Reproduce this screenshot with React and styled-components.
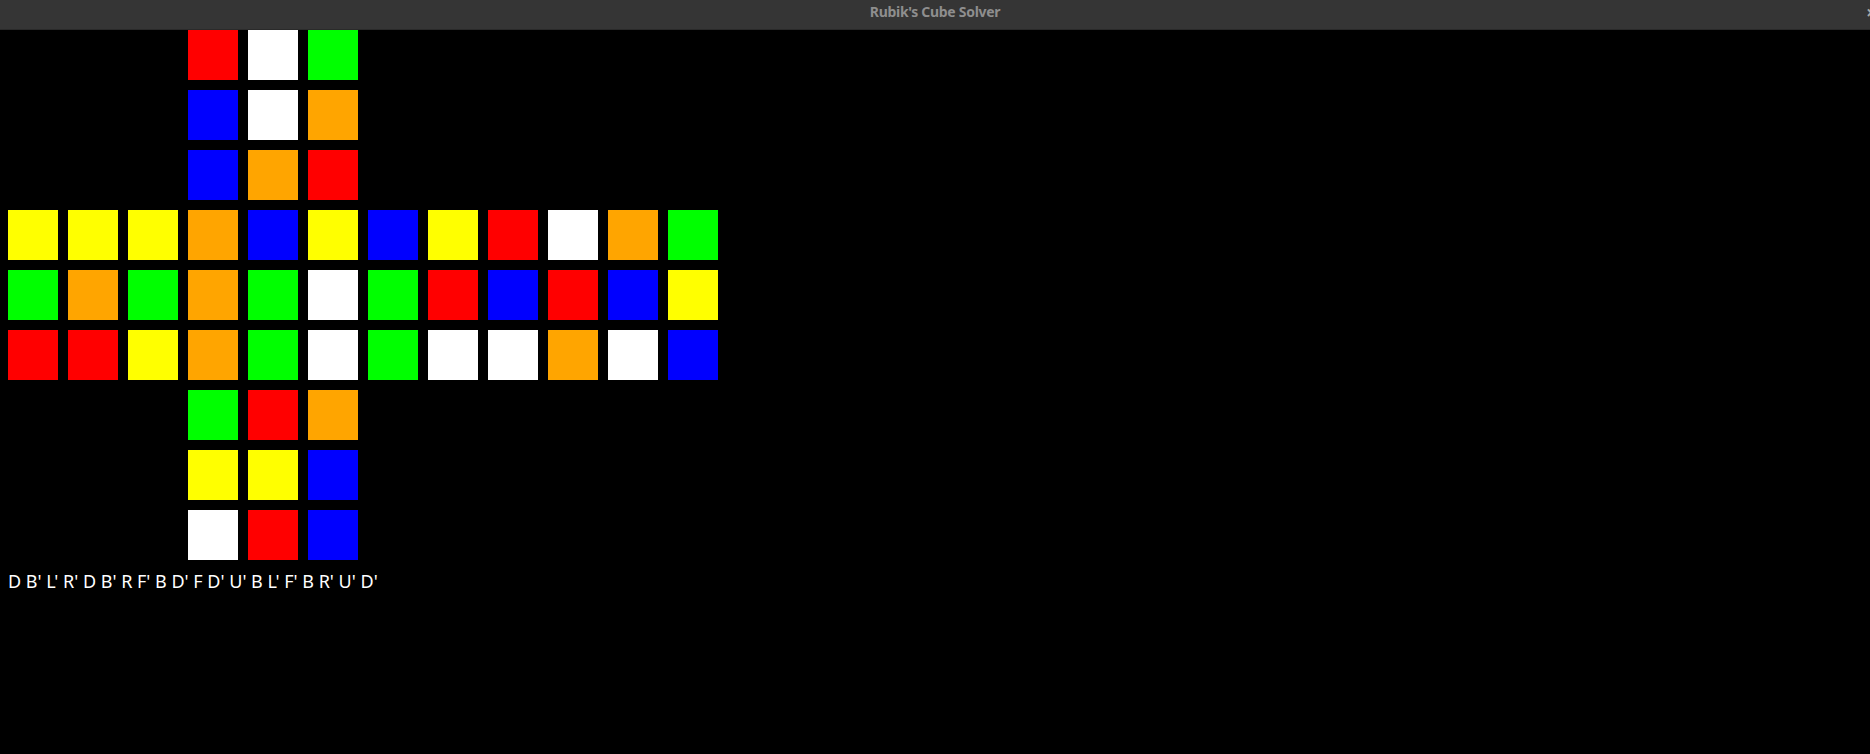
import React from 'react'
import styled, { createGlobalStyle } from 'styled-components'

const GlobalStyle = createGlobalStyle`
    html, body {
        margin: 0;
        padding: 0;
        background: #000;
        font-family: "Noto Sans", "DejaVu Sans", sans-serif;
    }
`

const COLORS = {
    R: '#ff0000',
    W: '#ffffff',
    G: '#00ff00',
    B: '#0000ff',
    O: '#ffa500',
    Y: '#ffff00',
}

// net layout: 9 rows x 12 columns, '.' is an empty cell
const NET = [
    '...RWG......',
    '...BWO......',
    '...BOR......',
    'YYYOBYBYRWOG',
    'GOGOGWGRBRBY',
    'RRYOGWGWWOWB',
    '...GRO......',
    '...YYB......',
    '...WRB......',
]

const SOLUTION = "D B' L' R' D B' R F' B D' F D' U' B L' F' B R' U' D'"

const Window = styled.div`
    width: 1870px;
    height: 754px;
    background: #000;
    overflow: hidden;
    display: flex;
    flex-direction: column;
`

const TitleBar = styled.div`
    position: relative;
    height: 27px;
    flex: 0 0 27px;
    padding-top: 2px;
    background: #353535;
    border-bottom: 1px solid #2a2a2a;
    display: flex;
    align-items: flex-start;
    justify-content: center;

    h1 {
        margin: 0;
        font-size: 14px;
        line-height: 19px;
        font-weight: 700;
        letter-spacing: -0.3px;
        color: #8e8e8e;
    }
`

const CloseButton = styled.span`
    position: absolute;
    right: -6px;
    top: 1px;
    font-size: 17px;
    font-weight: 700;
    color: #a8a8a8;
`

const Body = styled.div`
    padding: 0 8px;
`

const Net = styled.div`
    display: grid;
    grid-template-columns: repeat(12, 50px);
    grid-auto-rows: 50px;
    gap: 10px;
`

const Sticker = styled.div`
    background: ${props => props.color || 'transparent'};
`

const Moves = styled.div`
    margin-top: 9px;
    font-size: 18px;
    color: #fff;
    white-space: pre;
`

const App = () => {
    return (
        <Window>
            <GlobalStyle />
            <TitleBar>
                <h1>Rubik's Cube Solver</h1>
                <CloseButton>×</CloseButton>
            </TitleBar>
            <Body>
                <Net>
                    {NET.map((row, r) => row.split('').map((c, i) => (
                        <Sticker key={`${r}-${i}`} color={COLORS[c]} />
                    )))}
                </Net>
                <Moves>{SOLUTION}</Moves>
            </Body>
        </Window>
    )
}

export default App
